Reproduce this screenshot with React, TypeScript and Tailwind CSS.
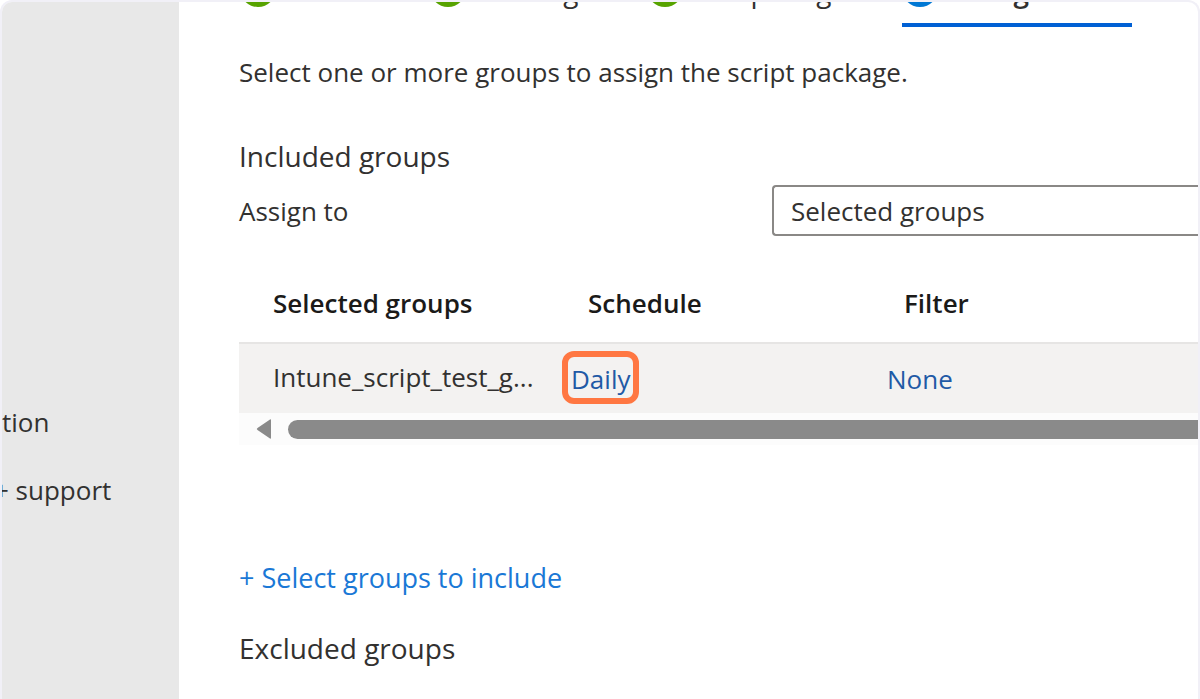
import { Check } from "lucide-react";

const doneTabs = [
  { label: "Basics", width: "w-[132px]" },
  { label: "Settings", width: "w-[159px]" },
  { label: "Scope tags", width: "w-[197px]" },
];

function WizardTabs() {
  return (
    <nav aria-label="Steps" className="ml-px flex h-[25px] items-end gap-[58px] overflow-hidden text-[28px]">
      {doneTabs.map((tab) => (
        <button
          key={tab.label}
          type="button"
          className={`flex h-[56px] shrink-0 items-start gap-[22px] whitespace-nowrap leading-[40px] ${tab.width}`}
        >
          <span className="flex size-[36px] shrink-0 items-center justify-center rounded-full bg-[#57a300] text-white">
            <Check size={24} />
          </span>
          {tab.label}
        </button>
      ))}
      <button
        type="button"
        aria-current="step"
        className="flex h-[56px] w-[230px] shrink-0 items-start gap-[22px] whitespace-nowrap border-b-4 border-[#0060d4] font-semibold leading-[40px]"
      >
        <span className="flex size-[36px] shrink-0 items-center justify-center rounded-full bg-[#0078d4] text-[22px] text-white">
          4
        </span>
        Assignments
      </button>
      <button type="button" aria-label="Next step" className="flex h-[56px] shrink-0 items-start">
        <span className="size-[36px] rounded-full border-2 border-[#a19f9d]" />
      </button>
    </nav>
  );
}

function GroupsTable() {
  return (
    <div>
      <table className="w-full table-fixed border-collapse text-left">
        <thead>
          <tr className="h-[76px] text-[#1b1a19]">
            <th className="w-[315px] pb-1 pl-[34px] font-semibold">Selected groups</th>
            <th className="w-[316px] pb-1 pl-[34px] font-semibold">Schedule</th>
            <th className="pb-1 pl-[34px] font-semibold">Filter</th>
          </tr>
        </thead>
        <tbody>
          <tr className="h-[70px] border-t-2 border-[#e6e5e4] bg-[#f3f2f1]">
            <td className="pb-1 pl-[34px]">Intune_script_test_g...</td>
            <td className="pl-[17px]">
              <a href="#daily" className="relative inline-block text-[#1f5aa6]">
                Daily
                <span className="absolute -inset-x-[9px] -top-[10px] -bottom-[7px] rounded-xl border-[6px] border-[#ff7742]" />
              </a>
            </td>
            <td className="pl-[17px]">
              <a href="#none" className="text-[#1f5aa6]">
                None
              </a>
            </td>
          </tr>
        </tbody>
      </table>
      <div className="flex h-8 items-center gap-4 bg-[#fcfcfc] pl-[17px]">
        <button type="button" aria-label="Scroll left">
          <svg width="16" height="20" viewBox="0 0 16 20" className="block">
            <path d="M15 1v18q0 1-1 .5L1.500 11q-1.500-1 0-2L14 .5q1-.5 1 .5z" fill="#8a8a8a" />
          </svg>
        </button>
        <div className="h-[19px] flex-1 rounded-l-full bg-[#8a8a8a]" />
      </div>
    </div>
  );
}

export default function App() {
  return (
    <div className="min-h-screen bg-white font-['Open_Sans','Noto_Sans',sans-serif] text-[26px] leading-[36px] text-[#323130]">
      <div className="flex min-h-screen overflow-hidden rounded-t-xl border-2 border-b-0 border-[#f1f0f7]">
        <aside className="flex w-[177px] shrink-0 flex-col gap-8 overflow-hidden bg-[#e8e8e8] pt-[402px]">
          <a href="#section" className="whitespace-nowrap">
            tion
          </a>
          <a href="#support" className="-ml-2 whitespace-nowrap">
            + support
          </a>
        </aside>
        <main className="min-w-0 flex-1 overflow-hidden pl-[60px]">
          <WizardTabs />
          <p className="mt-[27px]">Select one or more groups to assign the script package.</p>
          <h2 className="mt-12 text-[28px]">Included groups</h2>
          <div className="mt-[11px] flex items-center">
            <label htmlFor="assign-to" className="w-[533px] shrink-0">
              Assign to
            </label>
            <select
              id="assign-to"
              className="h-[51px] min-w-0 flex-1 appearance-none rounded-l border-2 border-r-0 border-[#8a8886] bg-white pl-[17px]"
            >
              <option>Selected groups</option>
            </select>
          </div>
          <div className="mt-[31px]">
            <GroupsTable />
          </div>
          <button type="button" className="mt-[115px] block text-[27px] text-[#1a78d6]">
            + Select groups to include
          </button>
          <h2 className="mt-[34px] text-[28px]">Excluded groups</h2>
        </main>
      </div>
    </div>
  );
}
